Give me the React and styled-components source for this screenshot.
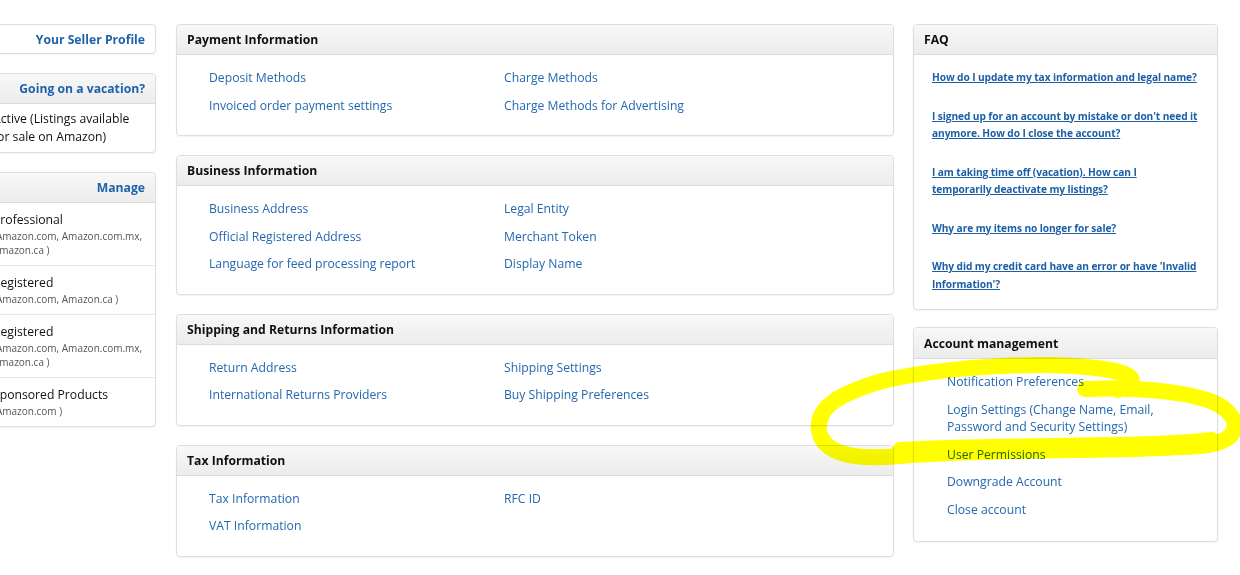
import styled, { createGlobalStyle } from "styled-components";

const GlobalStyle = createGlobalStyle`
  html, body {
    margin: 0;
    padding: 0;
    background: #fff;
    overflow: hidden;
  }
  body {
    font-family: "Open Sans", "Liberation Sans", Arial, sans-serif;
    color: #111;
  }
`;

const Page = styled.div`
  position: relative;
  width: 1240px;
  height: 575px;
  overflow: hidden;
  display: flex;
  align-items: flex-start;
  gap: 20px;
  padding-top: 24px;
  box-sizing: border-box;
`;

const Column = styled.div`
  display: flex;
  flex-direction: column;
  gap: ${(p) => p.$gap || 19}px;
  width: ${(p) => p.$width}px;
  margin-left: ${(p) => p.$offset || 0}px;
  flex-shrink: 0;
`;

const Card = styled.div`
  border: 1px solid #dedede;
  border-radius: 4px;
  background: #fff;
  box-shadow: 0 1px 2px rgba(0, 0, 0, 0.06);
  overflow: hidden;
`;

const CardHeader = styled.div`
  box-sizing: border-box;
  height: ${(p) => p.$h || 30}px;
  display: flex;
  align-items: center;
  justify-content: ${(p) => (p.$right ? "flex-end" : "flex-start")};
  padding: 0 10px;
  background: linear-gradient(#f8f8f8, #ececec);
  border-bottom: 1px solid #dcdcdc;
  font-size: 12.2px;
  font-weight: 700;
  color: #111;
`;

const HeaderLink = styled.span`
  color: #1d62aa;
  font-weight: 700;
  font-size: 12.2px;
`;

const ProfileCard = styled(Card)`
  height: 28px;
  display: flex;
  align-items: center;
  justify-content: flex-end;
  padding: 0 10px;
`;

const PlainBody = styled.div`
  padding: 6px 10px 6px;
  font-size: 12.2px;
  line-height: 18px;
  color: #111;
`;

const StatusRow = styled.div`
  padding: 8px 10px 8px;
  border-top: ${(p) => (p.$first ? "none" : "1px solid #e8e8e8")};
  white-space: nowrap;
`;

const StatusTitle = styled.div`
  font-size: 12.2px;
  line-height: 18px;
  color: #111;
`;

const StatusSub = styled.div`
  font-size: 10px;
  line-height: 14px;
  color: #555;
`;

const LinkGrid = styled.div`
  display: grid;
  grid-template-columns: 295px 1fr;
  grid-auto-rows: 27.5px;
  align-items: center;
  padding: 9px 0 16px 32px;
`;

const Link = styled.a`
  color: #2468b0;
  font-size: 12.2px;
  text-decoration: none;
  cursor: pointer;
`;

const FaqBody = styled.div`
  display: flex;
  flex-direction: column;
  gap: 21px;
  padding: 14px 12px 16px 18px;
`;

const FaqLink = styled.a`
  color: #1d5fa6;
  font-size: 10.2px;
  font-weight: 700;
  line-height: 17.5px;
  text-decoration: underline;
  white-space: nowrap;
  letter-spacing: -0.1px;
`;

const AccountBody = styled.div`
  display: flex;
  flex-direction: column;
  gap: 10px;
  padding: 14px 12px 23px 33px;
`;

const AccountLink = styled(Link)`
  line-height: 17.5px;
`;

const Highlight = styled.svg`
  position: absolute;
  left: 0;
  top: 0;
  pointer-events: none;
  mix-blend-mode: multiply;
`;

const paymentLinks = [
  ["Deposit Methods", "Charge Methods"],
  ["Invoiced order payment settings", "Charge Methods for Advertising"],
];
const businessLinks = [
  ["Business Address", "Legal Entity"],
  ["Official Registered Address", "Merchant Token"],
  ["Language for feed processing report", "Display Name"],
];
const shippingLinks = [
  ["Return Address", "Shipping Settings"],
  ["International Returns Providers", "Buy Shipping Preferences"],
];
const taxLinks = [
  ["Tax Information", "RFC ID"],
  ["VAT Information", ""],
];

const statuses = [
  { title: "Professional", sub: ["(Amazon.com, Amazon.com.mx,", "Amazon.ca )"] },
  { title: "Registered", sub: ["(Amazon.com, Amazon.ca )"] },
  { title: "Registered", sub: ["(Amazon.com, Amazon.com.mx,", "Amazon.ca )"] },
  { title: "Sponsored Products", sub: ["(Amazon.com )"] },
];

const faqs = [
  ["How do I update my tax information and legal name?"],
  ["I signed up for an account by mistake or don't need it", "anymore. How do I close the account?"],
  ["I am taking time off (vacation). How can I", "temporarily deactivate my listings?"],
  ["Why are my items no longer for sale?"],
  ["Why did my credit card have an error or have 'Invalid", "Information'?"],
];

const accountLinks = [
  ["Notification Preferences"],
  ["Login Settings (Change Name, Email,", "Password and Security Settings)"],
  ["User Permissions"],
  ["Downgrade Account"],
  ["Close account"],
];

function LinkSection({ title, rows }) {
  return (
    <Card>
      <CardHeader>{title}</CardHeader>
      <LinkGrid>
        {rows.flat().map((label, i) =>
          label ? <Link key={i}>{label}</Link> : <span key={i} />
        )}
      </LinkGrid>
    </Card>
  );
}

function Lines({ lines }) {
  return lines.map((l, i) => (
    <span key={i}>
      {l}
      {i < lines.length - 1 && <br />}
    </span>
  ));
}

export default function App() {
  return (
    <>
      <GlobalStyle />
      <Page>
        <Column $width={174} $offset={-18}>
          <ProfileCard>
            <HeaderLink>Your Seller Profile</HeaderLink>
          </ProfileCard>
          <Card>
            <CardHeader $right>
              <HeaderLink>Going on a vacation?</HeaderLink>
            </CardHeader>
            <PlainBody>
              Active (Listings available
              <br />
              for sale on Amazon)
            </PlainBody>
          </Card>
          <Card>
            <CardHeader $right>
              <HeaderLink>Manage</HeaderLink>
            </CardHeader>
            {statuses.map((s, i) => (
              <StatusRow key={i} $first={i === 0}>
                <StatusTitle>{s.title}</StatusTitle>
                {s.sub.map((line, j) => (
                  <StatusSub key={j}>{line}</StatusSub>
                ))}
              </StatusRow>
            ))}
          </Card>
        </Column>

        <Column $width={718}>
          <LinkSection title="Payment Information" rows={paymentLinks} />
          <LinkSection title="Business Information" rows={businessLinks} />
          <LinkSection title="Shipping and Returns Information" rows={shippingLinks} />
          <LinkSection title="Tax Information" rows={taxLinks} />
        </Column>

        <Column $width={305} $gap={17} style={{ marginLeft: -1 }}>
          <Card>
            <CardHeader>FAQ</CardHeader>
            <FaqBody>
              {faqs.map((f, i) => (
                <FaqLink key={i}>
                  <Lines lines={f} />
                </FaqLink>
              ))}
            </FaqBody>
          </Card>
          <Card>
            <CardHeader $h={31}>Account management</CardHeader>
            <AccountBody>
              {accountLinks.map((a, i) => (
                <AccountLink key={i}>
                  <Lines lines={a} />
                </AccountLink>
              ))}
            </AccountBody>
          </Card>
        </Column>

        <Highlight width="1240" height="575" viewBox="0 0 1240 575">
          <path
            d="M1085 389 C1140 387 1200 392 1222 407 C1243 422 1238 440 1208 445 C1150 452 1000 448 900 456 C850 461 822 452 819 430 C816 406 842 393 882 381 C950 366 1050 360 1110 370 C1132 374 1142 382 1118 390"
            fill="none"
            stroke="#ffff00"
            strokeWidth="16"
            strokeLinecap="round"
            strokeLinejoin="round"
          />
          <path
            d="M1212 440 C1150 448 1000 444 900 450"
            fill="none"
            stroke="#ffff00"
            strokeWidth="16"
            strokeLinecap="round"
          />
        </Highlight>
      </Page>
    </>
  );
}
